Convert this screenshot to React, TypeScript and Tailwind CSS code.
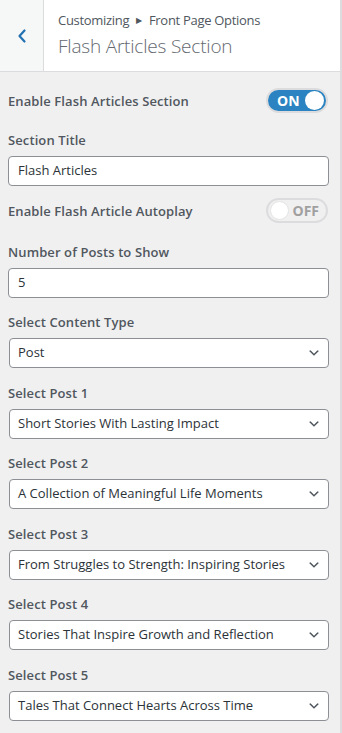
import React from "react";

const font = { fontFamily: '"Open Sans", "Noto Sans", sans-serif' };

function Chevron() {
  return (
    <svg width="14" height="14" viewBox="0 0 20 20" className="shrink-0">
      <path d="M5 6l5 5 5-5 2 1-7 7-7-7 2-1z" fill="#50575e" />
    </svg>
  );
}

function Toggle({ on }: { on: boolean }) {
  if (on) {
    return (
      <div className="w-[62px] h-[25px] rounded-full border-[2px] border-[#dcdcde] bg-[#2b84c1] flex items-center justify-between pl-[9px] pr-[2px] box-border">
        <span className="text-white text-[14px] font-bold leading-none">ON</span>
        <span className="w-[19px] h-[19px] rounded-full bg-white block" />
      </div>
    );
  }
  return (
    <div className="w-[62px] h-[25px] rounded-full border-[2px] border-[#dcdcde] bg-[#f0f0f1] flex items-center justify-between pl-[2px] pr-[7px] box-border">
      <span className="w-[19px] h-[19px] rounded-full bg-white block border border-[#e5e5e5]" />
      <span className="text-[#a0a0a0] text-[14px] font-bold leading-none">OFF</span>
    </div>
  );
}

function Label({ children }: { children: React.ReactNode }) {
  return <div className="text-[13px] font-semibold text-[#50575e] leading-[18px] tracking-[0.1px]">{children}</div>;
}

function TextInput({ value }: { value: string }) {
  return (
    <div className="mt-[7px] h-[30px] w-[321px] border border-[#8c8f94] rounded-[4px] bg-white flex items-center px-[9px] text-[13px] text-[#2c3338]">
      {value}
    </div>
  );
}

function Select({ value }: { value: string }) {
  return (
    <div className="mt-[7px] ml-[1px] h-[30px] w-[320px] border border-[#8c8f94] rounded-[4px] bg-white flex items-center justify-between pl-[8px] pr-[7px] text-[13px] text-[#2c3338]">
      <span className="whitespace-nowrap">{value}</span>
      <Chevron />
    </div>
  );
}

export default function App() {
  const posts = [
    "Short Stories With Lasting Impact",
    "A Collection of Meaningful Life Moments",
    "From Struggles to Strength: Inspiring Stories",
    "Stories That Inspire Growth and Reflection",
    "Tales That Connect Hearts Across Time",
  ];
  return (
    <div style={font} className="w-[342px] h-[733px] bg-[#f0f0f1] border-r-[2px] border-[#dcdcde] overflow-hidden box-border">
      <div className="h-[72px] bg-white border-b border-[#dcdcde] flex">
        <div className="w-[44px] h-full bg-[#f6f7f7] border-r border-[#dcdcde] flex items-center justify-center">
          <svg width="10" height="16" viewBox="0 0 10 16">
            <path d="M7.5 2.5 L2.5 8 L7.5 13.5" stroke="#2271b1" strokeWidth="2.2" fill="none" strokeLinecap="round" strokeLinejoin="round" />
          </svg>
        </div>
        <div className="pl-[14px] pt-[11px] flex flex-col">
          <div className="text-[13px] text-[#50575e] leading-[18px] tracking-[-0.3px] flex items-center">
            Customizing
            <span className="mx-[7px] text-[8px] leading-none">▶</span>
            Front Page Options
          </div>
          <div className="text-[19px] font-light text-[#646970] leading-[28px] mt-[3px] tracking-[-0.2px]">Flash Articles Section</div>
        </div>
      </div>
      <div className="pl-[8px] pt-[16px] flex flex-col">
        <div className="flex items-center justify-between pr-[12px]">
          <Label>Enable Flash Articles Section</Label>
          <Toggle on={true} />
        </div>
        <div className="mt-[18px]">
          <Label>Section Title</Label>
          <TextInput value="Flash Articles" />
        </div>
        <div className="mt-[12px] flex items-center justify-between pr-[12px]">
          <Label>Enable Flash Article Autoplay</Label>
          <Toggle on={false} />
        </div>
        <div className="mt-[20px]">
          <Label>Number of Posts to Show</Label>
          <TextInput value="5" />
        </div>
        <div className="mt-[15px]">
          <Label>Select Content Type</Label>
          <Select value="Post" />
        </div>
        {posts.map((p, i) => (
          <div key={i} className="mt-[15.5px]">
            <Label>Select Post {i + 1}</Label>
            <Select value={p} />
          </div>
        ))}
      </div>
    </div>
  );
}
